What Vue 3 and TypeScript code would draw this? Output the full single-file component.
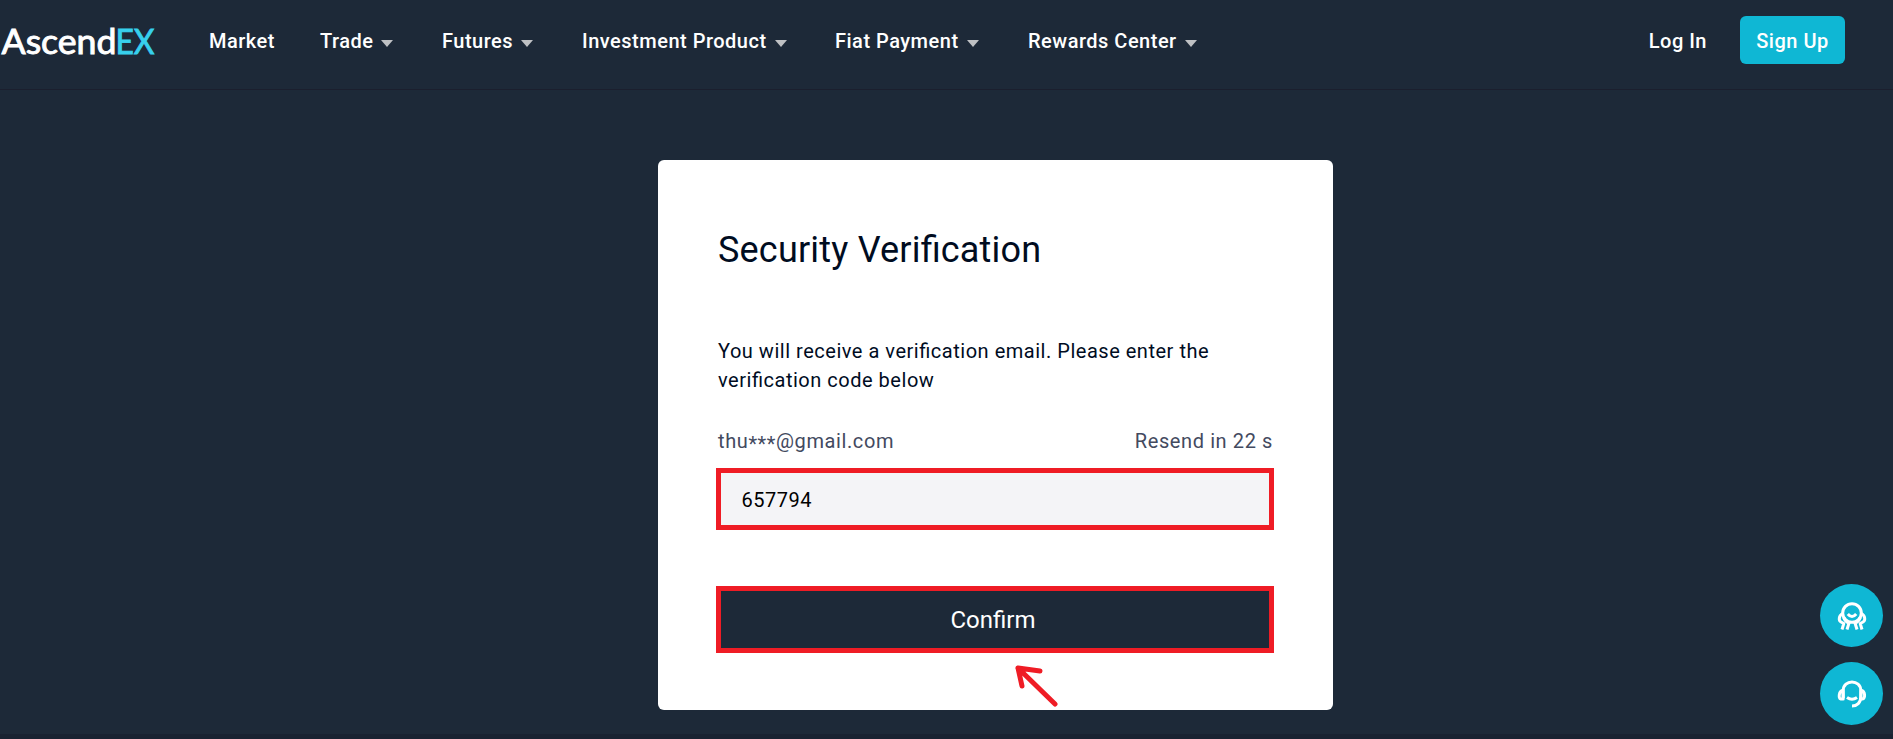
<script setup lang="ts">
interface NavItem {
  label: string
  menu: boolean
  key: string
}

const items: NavItem[] = [
  { label: 'Market', menu: false, key: 'market' },
  { label: 'Trade', menu: true, key: 'trade' },
  { label: 'Futures', menu: true, key: 'futures' },
  { label: 'Investment Product', menu: true, key: 'invest' },
  { label: 'Fiat Payment', menu: true, key: 'fiat' },
  { label: 'Rewards Center', menu: true, key: 'rewards' },
]
</script>

<template>
  <div class="page">
    <header class="bar">
      <svg class="logo" width="160" height="54" viewBox="0 0 160 54">
        <text x="1.5" y="40.5" textLength="115" lengthAdjust="spacingAndGlyphs" class="word">Ascend</text>
        <text x="115.5" y="40.5" textLength="39" lengthAdjust="spacingAndGlyphs" class="word ex">EX</text>
      </svg>
      <nav class="nav">
        <a v-for="item in items" :key="item.key" :class="['link', item.key]">
          <span class="label">{{ item.label }}</span>
          <svg v-if="item.menu" class="caret" width="12" height="7" viewBox="0 0 12 7">
            <path d="M0 0H12L6 7Z" fill="#bfc1c4" />
          </svg>
        </a>
      </nav>
      <a class="login">Log In</a>
      <button class="signup">Sign Up</button>
    </header>

    <main class="card">
      <h1 class="title">Security Verification</h1>
      <p class="intro">You will receive a verification email. Please enter the<br />verification code below</p>
      <div class="meta">
        <span class="email">thu<span class="mask">***</span>@gmail.com</span>
        <span class="resend">Resend in 22 s</span>
      </div>
      <div class="field">657794</div>
      <button class="confirm">Confirm</button>
      <svg class="arrow" width="46" height="46" viewBox="0 0 46 46">
        <path d="M41 39L4 3L26 6M4 3L8 21" />
      </svg>
    </main>

    <aside class="float">
      <button class="bubble">
        <svg width="32" height="32" viewBox="0 0 32 32" class="glyph">
          <circle cx="16" cy="13" r="9.3" />
          <path d="M11.8 14Q16 19 20.2 14" />
          <path d="M6.5 13.5C2.5 16 2.5 20.5 5 22L7.8 23.5L6 29.5M25.5 13.5C29.5 16 29.5 20.5 27 22L24.2 23.5L26 29.5M7.8 17.5Q9 21.5 13 23L11 29.5M24.2 17.5Q23 21.5 19 23L21 29.5" />
        </svg>
      </button>
      <button class="bubble">
        <svg width="32" height="32" viewBox="0 0 32 32" class="glyph">
          <path d="M7.2 20V12.5C7.2 1 24.8 1 24.8 12.5V19C24.8 24.5 21 28 16 28" />
          <path d="M11 19.5Q16 23 21 19.5" />
          <path d="M7 12.5C2.5 12.5 2.5 21 4.5 21H7.2ZM25 12.5C29.5 12.5 29.5 21 26.5 21H24.8Z" />
        </svg>
      </button>
    </aside>
  </div>
</template>

<style>
body {
  margin: 0;
  background: #1d2938;
}
</style>

<style scoped>
.page {
  position: relative;
  box-sizing: border-box;
  height: 739px;
  overflow: hidden;
  background: #1d2938;
  border-bottom: 5px solid #192231;
  font-family: Roboto, "Liberation Sans", sans-serif;
  font-size: 20px;
  letter-spacing: .5px;
  font-feature-settings: "liga" 1;
}
.bar {
  display: flex;
  align-items: center;
  box-sizing: border-box;
  height: 90px;
  padding: 0 48px 9px 0;
  border-bottom: 1px solid #1b1f2e;
  color: #fff;
  font-weight: 500;
}
.logo { flex: none; overflow: visible; letter-spacing: 0; }
.word { font-family: Lato, sans-serif; font-size: 34px; font-weight: 400; fill: #fff; stroke: #fff; stroke-width: .9px; }
.ex { fill: #37d0ed; stroke: #37d0ed; }
.nav { display: flex; flex: 1; margin-left: 49px; padding-top: 2px; }
.link { display: flex; align-items: center; white-space: nowrap; }
.caret { margin: 4px 0 0 8px; }
.market { width: 111px; }
.trade { width: 122px; }
.futures { width: 140px; }
.invest { width: 253px; }
.fiat { width: 193px; }
.login { margin-right: 33px; padding-top: 2px; }
.signup {
  width: 105px;
  height: 48px;
  padding: 2px 0 0;
  border: 0;
  border-radius: 6px;
  background: #0fb7d4;
  color: #fff;
  font: 500 20px Roboto, sans-serif;
  letter-spacing: .5px;
}
.card {
  position: relative;
  box-sizing: border-box;
  width: 675px;
  height: 550px;
  margin: 70px 0 0 658px;
  padding: 66px 58px 0;
  border-radius: 6px;
  background: #fff;
  color: #000c1f;
}
.title { margin: 0 0 0 2px; font-size: 36px; line-height: 48px; font-weight: 400; letter-spacing: .2px; }
.intro { margin: 63px 0 0 2px; line-height: 29px; white-space: nowrap; letter-spacing: .52px; }
.meta { display: flex; justify-content: space-between; margin: 32px 2px 0; line-height: 28px; color: #434a5f; letter-spacing: .6px; }
.mask { line-height: 0; vertical-align: -3px; }
.field {
  box-sizing: border-box;
  width: 558px;
  height: 62px;
  margin-top: 13px;
  padding-left: 20.5px;
  border: 5px solid #ef1c25;
  background: #f4f4f7;
  color: #000;
  line-height: 55px;
}
.confirm {
  display: block;
  width: 558px;
  height: 67px;
  margin-top: 56px;
  padding: 1px 4px 0 0;
  border: 5px solid #ef1c25;
  background: #1d2938;
  color: #fff;
  font: 400 24px Roboto, sans-serif;
  letter-spacing: 0;
}
.arrow {
  position: absolute;
  left: 356px;
  top: 505px;
  fill: none;
  stroke: #ef1c25;
  stroke-width: 5px;
  stroke-linecap: round;
  stroke-linejoin: round;
}
.float { position: absolute; right: 10px; top: 584px; display: grid; gap: 15px; }
.bubble {
  display: grid;
  place-items: center;
  width: 63px;
  height: 63px;
  padding: 0;
  border: 0;
  border-radius: 50%;
  background: #0fb7d4;
}
.glyph { fill: none; stroke: #fff; stroke-width: 3px; stroke-linejoin: round; }
</style>
